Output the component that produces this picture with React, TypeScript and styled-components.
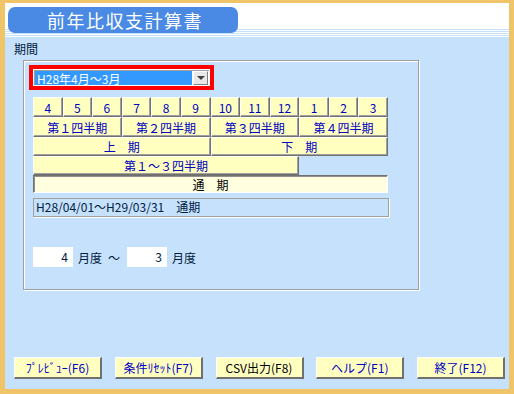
import React from 'react';
import styled, { createGlobalStyle } from 'styled-components';

const GlobalStyle = createGlobalStyle`
  html, body {
    margin: 0;
    padding: 0;
    background: #ffffff;
  }
  body {
    font-family: 'Noto Sans CJK JP', 'Liberation Sans', sans-serif;
    font-size: 12px;
  }
`;

const Frame = styled('div')`
  width: 514px;
  height: 394px;
  box-sizing: border-box;
  border-style: solid;
  border-color: #f0c468;
  border-width: 3px 5px 5px 5px;
  display: flex;
  flex-direction: column;
  background: #c6e1fc;
`;

const Header = styled('header')`
  height: 34px;
  flex: none;
  padding-left: 3px;
  box-sizing: border-box;
  background:
    linear-gradient(#ffffff 0 26px, transparent 26px),
    repeating-linear-gradient(#c6e1fc 0 1px, #ffffff 1px 2px);
`;

const TitlePill = styled('div')`
  margin-top: 4px;
  width: 230px;
  height: 26px;
  border-radius: 7px;
  background: #4a8ae4;
  color: #ffffff;
  font-size: 18px;
  letter-spacing: 1.5px;
  line-height: 26px;
  padding-left: 39px;
  box-sizing: border-box;
`;

const Body = styled('main')`
  flex: 1;
  display: flex;
  flex-direction: column;
  padding: 5px 4px 0 9px;
`;

const Label = styled('div')`
  height: 18px;
  line-height: 14px;
  color: #002040;
`;

const Group = styled('section')`
  margin-left: 9px;
  width: 396px;
  height: 230px;
  box-sizing: border-box;
  border: 1px solid #a0a0a0;
  box-shadow: inset 1px 1px 0 #ffffff, 1px 1px 0 #ffffff;
  padding: 4px 0 0 5px;
  display: flex;
  flex-direction: column;
`;

const SelectFrame = styled('div')`
  width: 185px;
  height: 25px;
  box-sizing: border-box;
  border: 4px solid #ff0000;
  display: flex;
`;

const SelectField = styled('div')`
  flex: 1;
  display: flex;
  background: #ffffff;
  padding: 0 1px 0 0;
  border: 1px solid #ffffff;
  box-shadow: inset 1px 1px 0 #a0a0a0;
`;

const SelectValue = styled('div')`
  flex: 1;
  background: #3399ff;
  color: #ffffff;
  line-height: 15px;
  padding-left: 2px;
  margin: 1px 1px 0 1px;
`;

const DropButton = styled('div')`
  width: 15px;
  margin-top: 1px;
  box-sizing: border-box;
  background: #e8e8e8;
  border: 1px solid;
  border-color: #ffffff #808080 #808080 #ffffff;
  display: flex;
  align-items: center;
  justify-content: center;

  &::after {
    content: '';
    border-left: 4px solid transparent;
    border-right: 4px solid transparent;
    border-top: 4px solid #404040;
  }
`;

const PeriodGrid = styled('div')`
  margin: 7px 0 0 4px;
  width: 355px;
  display: grid;
  grid-template-columns: repeat(12, 1fr);
  grid-template-rows: 20px 20px 19px 19px 18px;
`;

const PeriodButton = styled('button')<{ $span: number; $pressed?: boolean }>`
  grid-column: span ${(p) => p.$span};
  font: inherit;
  font-size: 12px;
  padding: 0;
  margin: 0;
  min-width: 0;
  white-space: pre;
  color: ${(p) => (p.$pressed ? '#000000' : '#0000c0')};
  background: ${(p) => (p.$pressed ? '#ffffe0' : '#ffffc0')};
  border: 1px solid;
  border-color: ${(p) =>
    p.$pressed ? '#707070 #ffffff #ffffff #707070' : '#ffffff #707070 #707070 #ffffff'};
  box-shadow: ${(p) =>
    p.$pressed ? 'inset 1px 1px 0 #909090' : 'inset -1px -1px 0 #a0a0a0'};
  line-height: 15px;
`;

const InfoBox = styled('div')`
  margin: 5px 0 0 4px;
  width: 356px;
  height: 19px;
  box-sizing: border-box;
  border: 1px solid #a0a0a0;
  box-shadow: 1px 1px 0 #ffffff;
  color: #002040;
  line-height: 16px;
  padding-left: 2px;
  white-space: pre;
`;

const MonthRow = styled('div')`
  margin: 30px 0 0 4px;
  display: flex;
  align-items: center;
  height: 20px;
  color: #002040;
`;

const MonthInput = styled('div')`
  width: 40px;
  height: 20px;
  box-sizing: border-box;
  background: #ffffff;
  text-align: right;
  padding-right: 5px;
  line-height: 20px;
`;

const MonthUnit = styled('span')`
  margin-left: 5px;
`;

const Tilde = styled('span')`
  margin: 0 7px 0 6px;
`;

const Footer = styled('footer')`
  margin-top: 67px;
  display: grid;
  grid-template-columns: repeat(5, 88px);
  justify-content: space-between;
`;

const ActionButton = styled('button')<{ $dark?: boolean }>`
  height: 22px;
  font: inherit;
  font-size: 12px;
  padding: 0;
  color: ${(p) => (p.$dark ? '#000000' : '#0000c0')};
  background: #ffffc0;
  border-style: solid;
  border-width: 1px 2px 2px 1px;
  border-color: #ffffff #707070 #707070 #ffffff;
`;

const months = ['4', '5', '6', '7', '8', '9', '10', '11', '12', '1', '2', '3'];
const quarters = ['第１四半期', '第２四半期', '第３四半期', '第４四半期'];
const actions = [
  { label: 'ﾌﾟﾚﾋﾞｭｰ(F6)' },
  { label: '条件ﾘｾｯﾄ(F7)' },
  { label: 'CSV出力(F8)', dark: true },
  { label: 'ヘルプ(F1)' },
  { label: '終了(F12)' },
];

export default function App() {
  return (
    <>
      <GlobalStyle />
      <Frame>
        <Header>
          <TitlePill>前年比収支計算書</TitlePill>
        </Header>
        <Body>
          <Label>期間</Label>
          <Group>
            <SelectFrame>
              <SelectField>
                <SelectValue>H28年4月～3月</SelectValue>
                <DropButton />
              </SelectField>
            </SelectFrame>
            <PeriodGrid>
              {months.map((m) => (
                <PeriodButton key={m} $span={1}>
                  {m}
                </PeriodButton>
              ))}
              {quarters.map((q) => (
                <PeriodButton key={q} $span={3}>
                  {q}
                </PeriodButton>
              ))}
              <PeriodButton $span={6}>{'上　期'}</PeriodButton>
              <PeriodButton $span={6}>{'下　期'}</PeriodButton>
              <PeriodButton $span={9}>第１～３四半期</PeriodButton>
              <PeriodButton $span={12} $pressed>
                {'通　期'}
              </PeriodButton>
            </PeriodGrid>
            <InfoBox>{'H28/04/01～H29/03/31　通期'}</InfoBox>
            <MonthRow>
              <MonthInput>4</MonthInput>
              <MonthUnit>月度</MonthUnit>
              <Tilde>～</Tilde>
              <MonthInput>3</MonthInput>
              <MonthUnit>月度</MonthUnit>
            </MonthRow>
          </Group>
          <Footer>
            {actions.map((a) => (
              <ActionButton key={a.label} $dark={a.dark}>
                {a.label}
              </ActionButton>
            ))}
          </Footer>
        </Body>
      </Frame>
    </>
  );
}
